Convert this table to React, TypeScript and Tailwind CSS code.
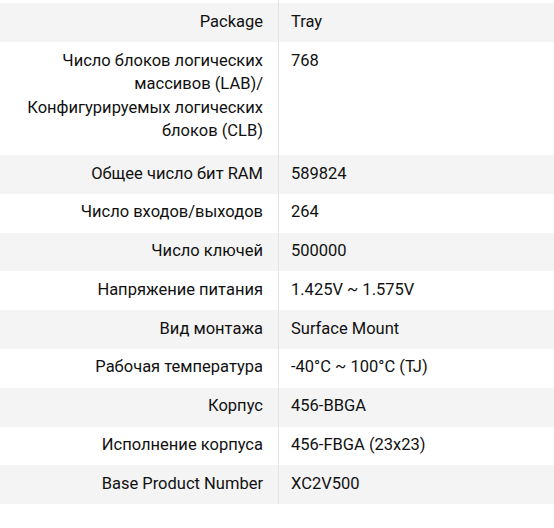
const rows: { label: string; value: string }[] = [
  { label: 'Package', value: 'Tray' },
  { label: 'Число блоков логических массивов (LAB)/ Конфигурируемых логических блоков (CLB)', value: '768' },
  { label: 'Общее число бит RAM', value: '589824' },
  { label: 'Число входов/выходов', value: '264' },
  { label: 'Число ключей', value: '500000' },
  { label: 'Напряжение питания', value: '1.425V ~ 1.575V' },
  { label: 'Вид монтажа', value: 'Surface Mount' },
  { label: 'Рабочая температура', value: '-40°C ~ 100°C (TJ)' },
  { label: 'Корпус', value: '456-BBGA' },
  { label: 'Исполнение корпуса', value: '456-FBGA (23x23)' },
  { label: 'Base Product Number', value: 'XC2V500' },
];

export default function App() {
  return (
    <div
      className="w-[554px] min-h-[528px] bg-white text-[16.5px] leading-[23.5px] text-[#111111]"
      style={{ fontFamily: 'Roboto, "Noto Sans", sans-serif' }}
    >
      <div className="flex h-[3px]">
        <div className="w-[279px] shrink-0 border-r border-[#e4e4e4]" />
      </div>
      {rows.map((r, i) => (
        <div
          key={r.label}
          className={`flex ${i % 2 === 0 ? 'bg-[#f4f4f4]' : 'bg-white'} ${
            i === 1 ? 'h-[113px]' : i === 0 ? 'h-[39px]' : 'h-[38.8px]'
          }`}
        >
          <div className="w-[279px] shrink-0 border-r border-[#e4e4e4] pl-[16px] pr-[15px] pt-[6.5px] text-right">
            {r.label}
          </div>
          <div className="flex-1 pl-[12px] pr-3 pt-[6.5px]">{r.value}</div>
        </div>
      ))}
    </div>
  );
}
